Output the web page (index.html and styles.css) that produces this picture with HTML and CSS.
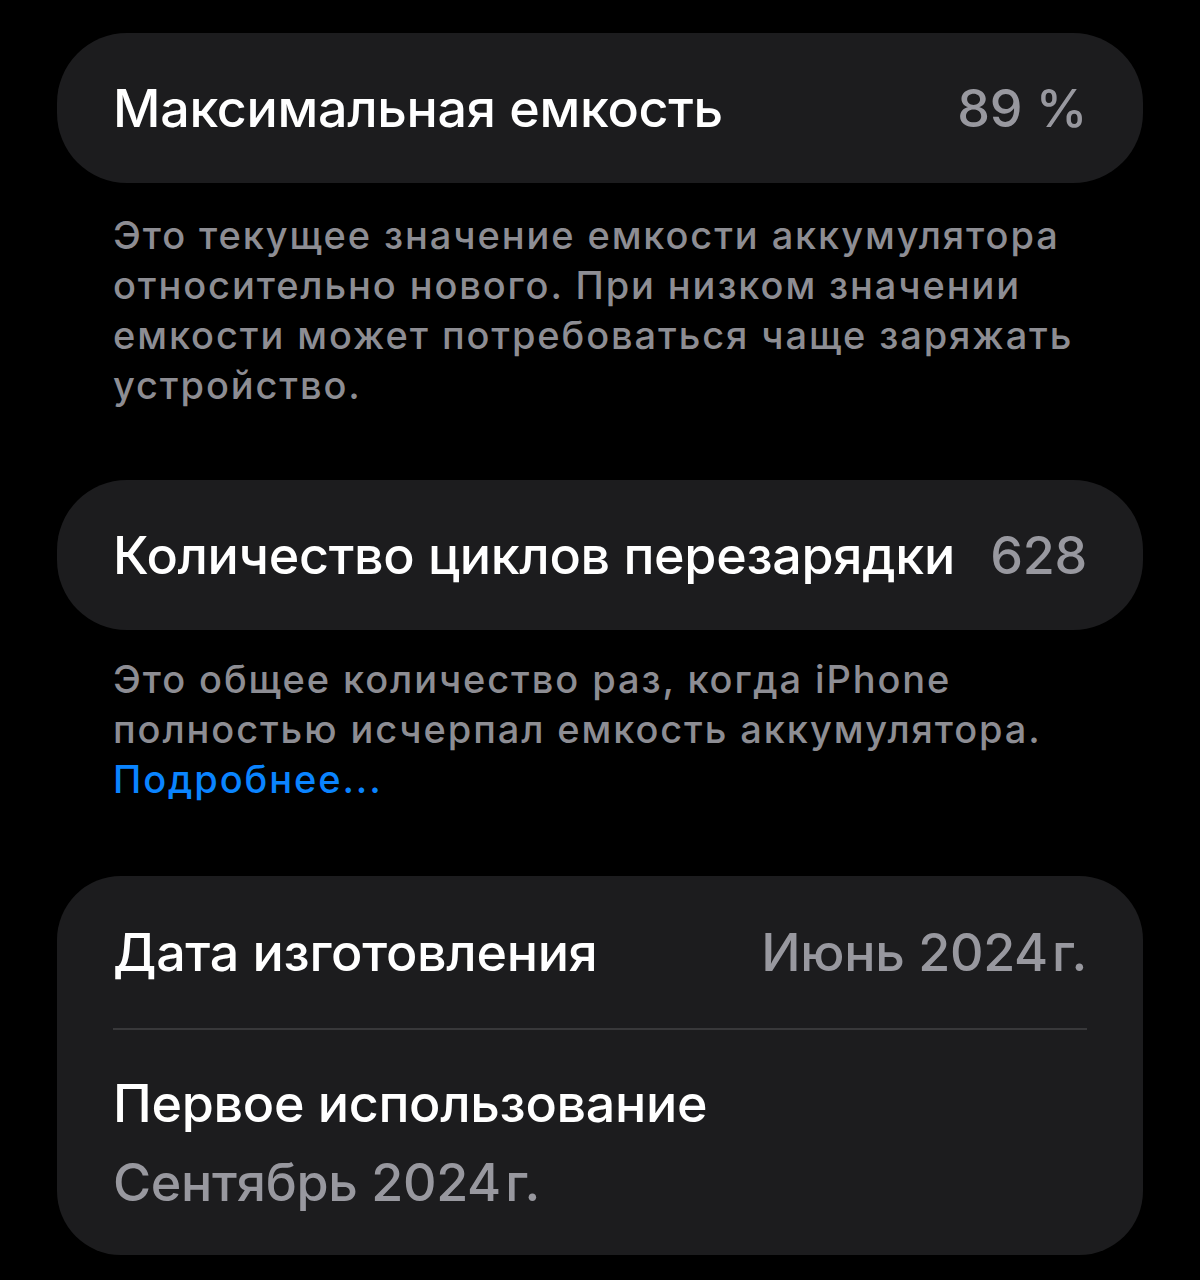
FILE: index.html
```html
<!DOCTYPE html>
<html lang="ru">
<head>
<meta charset="utf-8">
<title>Аккумулятор</title>
<link rel="stylesheet" href="styles.css">
</head>
<body>
<main class="page">
  <section class="card">
    <div class="row">
      <span class="title">Максимальная емкость</span>
      <span class="value">89 %</span>
    </div>
  </section>
  <p class="footer footer-first">Это текущее значение емкости аккумулятора относительно нового. При низком значении емкости может потребоваться чаще заряжать устройство.</p>

  <section class="card">
    <div class="row">
      <span class="title">Количество циклов перезарядки</span>
      <span class="value">628</span>
    </div>
  </section>
  <p class="footer footer-second">Это общее количество раз, когда iPhone полностью исчерпал емкость аккумулятора. <a class="link" href="#">Подробнее...</a></p>

  <section class="card card-list">
    <div class="row">
      <span class="title">Дата изготовления</span>
      <span class="value">Июнь 2024&#8202;г.</span>
    </div>
    <div class="separator"></div>
    <div class="row-stack">
      <span class="title">Первое использование</span>
      <span class="value">Сентябрь 2024&#8202;г.</span>
    </div>
  </section>
</main>
</body>
</html>
```

FILE: styles.css
```css
html, body {
  margin: 0;
  padding: 0;
  background: #000;
}

body {
  font-family: Inter, "Noto Sans", "Liberation Sans", sans-serif;
  -webkit-font-smoothing: antialiased;
}

.page {
  padding: 33px 57px 0;
  display: flex;
  flex-direction: column;
}

.card {
  background: #1c1c1e;
  border-radius: 70px;
  padding: 0 56px;
}

.card-list {
  border-radius: 64px;
}

.row {
  height: 150px;
  display: flex;
  align-items: center;
  justify-content: space-between;
  gap: 24px;
}

.card-list .row {
  height: 152px;
}

.title {
  color: #ffffff;
  font-size: 52px;
  font-weight: 500;
  letter-spacing: -0.3px;
  white-space: nowrap;
}

.value {
  color: #98989f;
  font-size: 52px;
  font-weight: 500;
  letter-spacing: -0.3px;
  white-space: nowrap;
}

.separator {
  height: 2px;
  background: #38383a;
}

.row-stack {
  display: flex;
  flex-direction: column;
  padding: 34px 0 33px;
  line-height: 79px;
}

.footer {
  margin: 0;
  padding: 0 56px;
  color: #8d8d93;
  font-size: 38px;
  font-weight: 500;
  letter-spacing: 1.9px;
  line-height: 50px;
}

.footer-first {
  margin-top: 27px;
  margin-bottom: 70px;
}

.footer-second {
  margin-top: 24px;
  margin-bottom: 72px;
}

.link {
  display: block;
  color: #0a84ff;
  text-decoration: none;
}
```
